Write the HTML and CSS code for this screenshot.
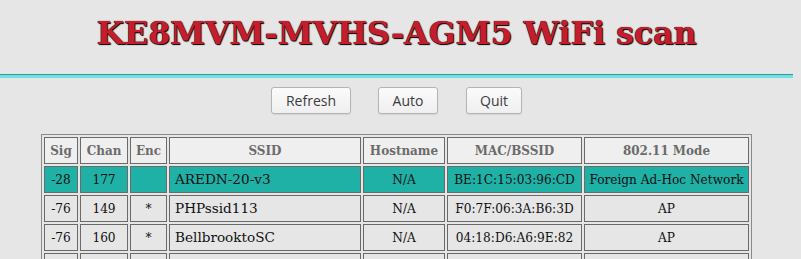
FILE: index.html
```html
<!DOCTYPE html>
<html lang="en">
<head>
  <meta charset="UTF-8" />
  <meta name="viewport" content="width=device-width,initial-scale=1.0" />
  <title>WiFi scan</title>
  <link rel="stylesheet" href="styles.css">
</head>
<body>
  <div class="page">
    <div class="scan-header">
      <h1 class="scan-title">KE8MVM-MVHS-AGM5 WiFi scan</h1>
    </div>
    <div class="scan-rule"></div>
    <div class="scan-actions">
      <button class="scan-btn btn-refresh">Refresh</button>
      <button class="scan-btn btn-auto">Auto</button>
      <button class="scan-btn btn-quit">Quit</button>
    </div>
    <table class="scan-table">
      <thead>
        <tr>
          <th class="col-sig">Sig</th>
          <th class="col-chan">Chan</th>
          <th class="col-enc">Enc</th>
          <th class="col-ssid">SSID</th>
          <th class="col-host">Hostname</th>
          <th class="col-mac">MAC/BSSID</th>
          <th class="col-mode">802.11 Mode</th>
        </tr>
      </thead>
      <tbody>
        <tr class="is-mesh">
          <td>-28</td>
          <td>177</td>
          <td></td>
          <td class="ssid">AREDN-20-v3</td>
          <td>N/A</td>
          <td>BE:1C:15:03:96:CD</td>
          <td>Foreign Ad-Hoc Network</td>
        </tr>
        <tr>
          <td>-76</td>
          <td>149</td>
          <td>*</td>
          <td class="ssid">PHPssid113</td>
          <td>N/A</td>
          <td>F0:7F:06:3A:B6:3D</td>
          <td>AP</td>
        </tr>
        <tr>
          <td>-76</td>
          <td>160</td>
          <td>*</td>
          <td class="ssid">BellbrooktoSC</td>
          <td>N/A</td>
          <td>04:18:D6:A6:9E:82</td>
          <td>AP</td>
        </tr>
        <tr>
          <td>-81</td>
          <td>36</td>
          <td>*</td>
          <td class="ssid">MVHS-Guest</td>
          <td>N/A</td>
          <td>A4:2B:8C:11:0F:20</td>
          <td>AP</td>
        </tr>
      </tbody>
    </table>
  </div>
</body>
</html>
```

FILE: styles.css
```css
html, body {
  margin: 0;
  background: #e6e6e6;
}
body {
  font-family: 'DejaVu Serif', serif;
  font-size: 14px;
  color: #111;
}
.page {
  padding-right: 8px;
}
.scan-header {
  padding-top: 17px;
  height: 74px;
  box-sizing: border-box;
}
.scan-title {
  margin: 0;
  text-align: center;
  font-family: 'DejaVu Serif', serif;
  font-weight: bold;
  font-size: 31.6px;
  line-height: 32px;
  color: #c41d2e;
  text-shadow: 0 0 1px #000, 1px 1px 1px #000;
}
.scan-rule {
  border-top: 1px solid #3f9494;
  height: 3px;
  background: #6fe3e3;
}
.scan-actions {
  display: flex;
  justify-content: center;
  gap: 27px;
  margin-top: 9px;
}
.scan-btn {
  height: 27px;
  padding: 0;
  font-family: 'Open Sans', sans-serif;
  font-size: 14px;
  color: #3c3c3c;
  background: linear-gradient(180deg, #fbfbfb 0%, #efefef 100%);
  border: 1px solid #b4b4b4;
  border-radius: 3px;
  box-shadow: 0 1px 1px rgba(0,0,0,0.08);
}
.btn-refresh { width: 80px; }
.btn-auto { width: 60px; margin-right: 1px; }
.btn-quit { width: 56px; }
.scan-table {
  margin: 20px 0 0 41px;
  border: 1px solid #8a8a8a;
  border-spacing: 2px;
  width: 711px;
  table-layout: fixed;
  font-stretch: condensed;
}
.scan-table th,
.scan-table td {
  border: 1px solid #6a6a6a;
  padding: 4px 1px;
  line-height: 17px;
  height: 17px;
  font-size: 13.5px;
  text-align: center;
  white-space: nowrap;
  overflow: hidden;
}
.scan-table th {
  background: #efefef;
  color: #6b6b6b;
  font-weight: bold;
  font-size: 13.3px;
}
.scan-table td.ssid {
  text-align: left;
  padding-left: 5px;
  font-stretch: normal;
  font-size: 13.6px;
}
.scan-table tr.is-mesh td {
  background: #1fb0a6;
}
.col-sig { width: 30px; }
.col-chan { width: 44px; }
.col-enc { width: 33px; }
.col-ssid { width: 188px; }
.col-host { width: 78px; }
.col-mac { width: 131px; }
.col-mode { width: 161px; }
```
